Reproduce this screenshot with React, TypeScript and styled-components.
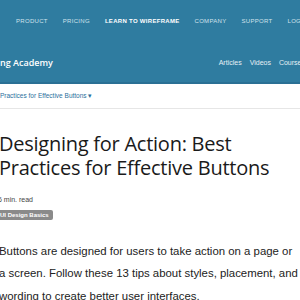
import React from 'react';
import styled, { createGlobalStyle } from 'styled-components';

const GlobalStyle = createGlobalStyle`
  html, body {
    margin: 0;
    padding: 0;
    background: #ffffff;
    overflow: hidden;
  }
  body {
    width: 300px;
    height: 300px;
  }
`;

const Header = styled.header`
  background-color: #2f7ca0;
  border-bottom: 2px solid #2a7094;
  height: 82px;
  display: flex;
  flex-direction: column;
`;

const TopNav = styled.nav`
  display: flex;
  align-items: center;
  height: 42px;
  padding-left: 16px;
  white-space: nowrap;
`;

const TopLink = styled.a<{ $active?: boolean }>`
  font-family: 'Liberation Sans', Arial, sans-serif;
  font-size: 6px;
  letter-spacing: 0.3px;
  font-weight: ${({ $active }) => ($active ? 700 : 400)};
  color: ${({ $active }) => ($active ? '#ffffff' : '#cfe2ec')};
  text-transform: uppercase;
  margin-right: 15px;
  text-decoration: none;
`;

const SubBar = styled.div`
  display: flex;
  align-items: center;
  justify-content: space-between;
  height: 40px;
  white-space: nowrap;
`;

const Brand = styled.div`
  font-family: 'Open Sans', sans-serif;
  font-size: 9px;
  font-weight: 600;
  color: #ffffff;
`;

const SubNav = styled.div`
  display: flex;
  gap: 8px;
  margin-right: -5px;
`;

const SubLink = styled.a`
  font-family: 'Liberation Sans', Arial, sans-serif;
  font-size: 7px;
  color: #e6f0f5;
  text-decoration: none;
`;

const Breadcrumb = styled.div`
  height: 24px;
  display: flex;
  align-items: center;
  border-bottom: 1px solid #e6e6e6;
  font-family: 'Liberation Sans', Arial, sans-serif;
  font-size: 6.5px;
  color: #2b6f9c;
  white-space: nowrap;
`;

const Article = styled.main`
  margin-left: -3px;
  padding-top: 23px;
`;

const Title = styled.h1`
  margin: 0 0 0 2px;
  font-family: 'Open Sans', sans-serif;
  font-weight: 400;
  font-size: 20px;
  line-height: 24px;
  color: #1a1a1a;
  letter-spacing: -0.25px;
`;

const Meta = styled.div`
  margin-top: 16px;
  margin-left: 1px;
  font-family: 'Liberation Sans', Arial, sans-serif;
  font-size: 7px;
  color: #444444;
`;

const Tag = styled.span`
  display: inline-block;
  margin-top: 3px;
  margin-left: -1px;
  padding: 2px 4px;
  border-radius: 2px;
  background: #8a8a8a;
  color: #ffffff;
  font-family: 'Liberation Sans', Arial, sans-serif;
  font-size: 6px;
  font-weight: 700;
`;

const Lead = styled.p`
  margin: 19px 0 0 2px;
  font-family: 'Liberation Sans', Arial, sans-serif;
  font-size: 11.4px;
  line-height: 22.4px;
  color: #222222;
  white-space: nowrap;
`;

const navItems = ['Product', 'Pricing', 'Learn to Wireframe', 'Company', 'Support', 'Login'];

export default function App() {
  return (
    <>
      <GlobalStyle />
      <Header>
        <TopNav>
          {navItems.map((item) => (
            <TopLink key={item} $active={item === 'Learn to Wireframe'}>
              {item}
            </TopLink>
          ))}
        </TopNav>
        <SubBar>
          <Brand>ng Academy</Brand>
          <SubNav>
            <SubLink>Articles</SubLink>
            <SubLink>Videos</SubLink>
            <SubLink>Courses</SubLink>
          </SubNav>
        </SubBar>
      </Header>
      <Breadcrumb>Practices for Effective Buttons ▾</Breadcrumb>
      <Article>
        <Title>
          Designing for Action: Best
          <br />
          Practices for Effective Buttons
        </Title>
        <Meta>6 min. read</Meta>
        <Tag>UI Design Basics</Tag>
        <Lead>
          Buttons are designed for users to take action on a page or
          <br />
          a screen. Follow these 13 tips about styles, placement, and
          <br />
          wording to create better user interfaces.
        </Lead>
      </Article>
    </>
  );
}
